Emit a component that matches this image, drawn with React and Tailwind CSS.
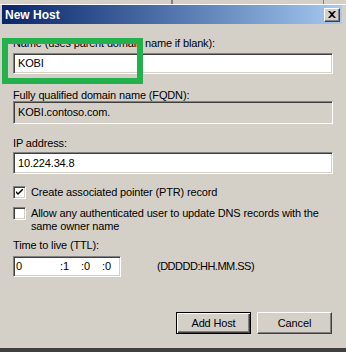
import React from "react";

const sunken =
  "border border-t-[#808080] border-l-[#808080] border-r-white border-b-white shadow-[inset_1px_1px_0_#404040,inset_-1px_-1px_0_#d4d0c8]";

function Field({ value, gray, h }) {
  return (
    <div
      className={`${sunken} ${gray ? "bg-[#d4d0c8]" : "bg-white"} ${h} w-[320px] flex items-center pl-[4px] text-black`}
    >
      {value}
    </div>
  );
}

function Check({ checked }) {
  return (
    <div className={`${sunken} bg-white w-[13px] h-[13px] shrink-0 relative`}>
      {checked && (
        <svg width="7" height="7" viewBox="0 0 7 7" className="absolute left-[2px] top-[2px]">
          <path d="M0 2 L0 4 L2 6 L7 1 L7 -1 L2 4 Z" fill="#000" />
        </svg>
      )}
    </div>
  );
}

export default function App() {
  return (
    <div
      className="w-[346px] h-[352px] bg-[#d4d0c8] relative overflow-hidden text-[11px] tracking-[-0.15px] text-black"
      style={{ fontFamily: '"Liberation Sans", Arial, sans-serif' }}
    >
      {/* top strip (parent window remnant) */}
      <div className="h-[5px] relative border-b border-b-[#ffffff]">
        <div className="absolute left-[171px] top-0 h-[4px] w-[2px] bg-[#808080]" />
        <div className="absolute left-[323px] top-0 h-[4px] w-[1px] bg-[#808080]" />
      </div>

      {/* title bar */}
      <div className="ml-[2px] w-[340px] h-[19px] bg-linear-to-r from-[#0a246a] to-[#a6caf0] flex items-center justify-between pl-[3px] pr-[2px]">
        <span className="text-white font-bold text-[12px] leading-[12px] tracking-normal">New Host</span>
        <div className="w-[16px] h-[14px] bg-[#d4d0c8] border border-t-white border-l-white border-r-[#404040] border-b-[#404040] shadow-[inset_-1px_-1px_0_#808080] flex items-center justify-center">
          <svg width="8" height="7" viewBox="0 0 8 7">
            <path d="M0 0 L2 0 L4 2 L6 0 L8 0 L5 3.5 L8 7 L6 7 L4 5 L2 7 L0 7 L3 3.5 Z" fill="#000" />
          </svg>
        </div>
      </div>

      {/* body */}
      <div className="pl-[13px] flex flex-col">
        <div className="mt-[14px] leading-[11px] h-[11px]">Name (uses parent domain name if blank):</div>
        <div className="mt-[4px]">
          <Field value="KOBI" h="h-[21px]" />
        </div>

        <div className="mt-[16px] leading-[11px] h-[11px]">Fully qualified domain name (FQDN):</div>
        <div className="mt-0">
          <Field value="KOBI.contoso.com." gray h="h-[23px]" />
        </div>

        <div className="mt-[14px] leading-[11px] h-[11px]">IP address:</div>
        <div className="mt-[3px]">
          <Field value="10.224.34.8" h="h-[22px]" />
        </div>

        <div className="mt-[12px] flex items-center gap-[5px] h-[13px]">
          <Check checked />
          <span className="leading-[13px]">Create associated pointer (PTR) record</span>
        </div>

        <div className="mt-[8px] flex items-start gap-[5px]">
          <Check />
          <span className="leading-[13px] w-[300px]">
            Allow any authenticated user to update DNS records with the
            <br />
            same owner name
          </span>
        </div>

        <div className="mt-[7px] leading-[11px] h-[11px]">Time to live (TTL):</div>
        <div className="mt-[5px] flex items-center">
          <div className={`${sunken} bg-white w-[108px] h-[21px] flex items-center pl-[2px]`}>
            <span className="w-[44px]">0</span>
            <span className="w-[21px]">:1</span>
            <span className="w-[21px]">:0</span>
            <span>:0</span>
          </div>
          <span className="ml-[36px] tracking-[-0.5px]">(DDDDD:HH.MM.SS)</span>
        </div>

        <div className="mt-[35px] flex justify-end gap-[6px] pr-[14px]">
          <div className="w-[75px] h-[22px] bg-[#d4d0c8] border border-black shadow-[inset_1px_1px_0_#fff,inset_-1px_-1px_0_#404040,inset_-2px_-2px_0_#808080] flex items-center justify-center">
            Add Host
          </div>
          <div className="w-[75px] h-[22px] bg-[#d4d0c8] border border-t-white border-l-white border-r-[#404040] border-b-[#404040] shadow-[inset_-1px_-1px_0_#808080] flex items-center justify-center">
            Cancel
          </div>
        </div>
      </div>

      {/* bottom dark edge */}
      <div className="absolute left-0 bottom-0 w-full h-[4px] bg-[#404040]" />

      {/* green annotation rectangle */}
      <div className="absolute left-[2px] top-[38px] w-[141px] h-[46px] border-[6px] border-[#22b14c]" />
    </div>
  );
}
